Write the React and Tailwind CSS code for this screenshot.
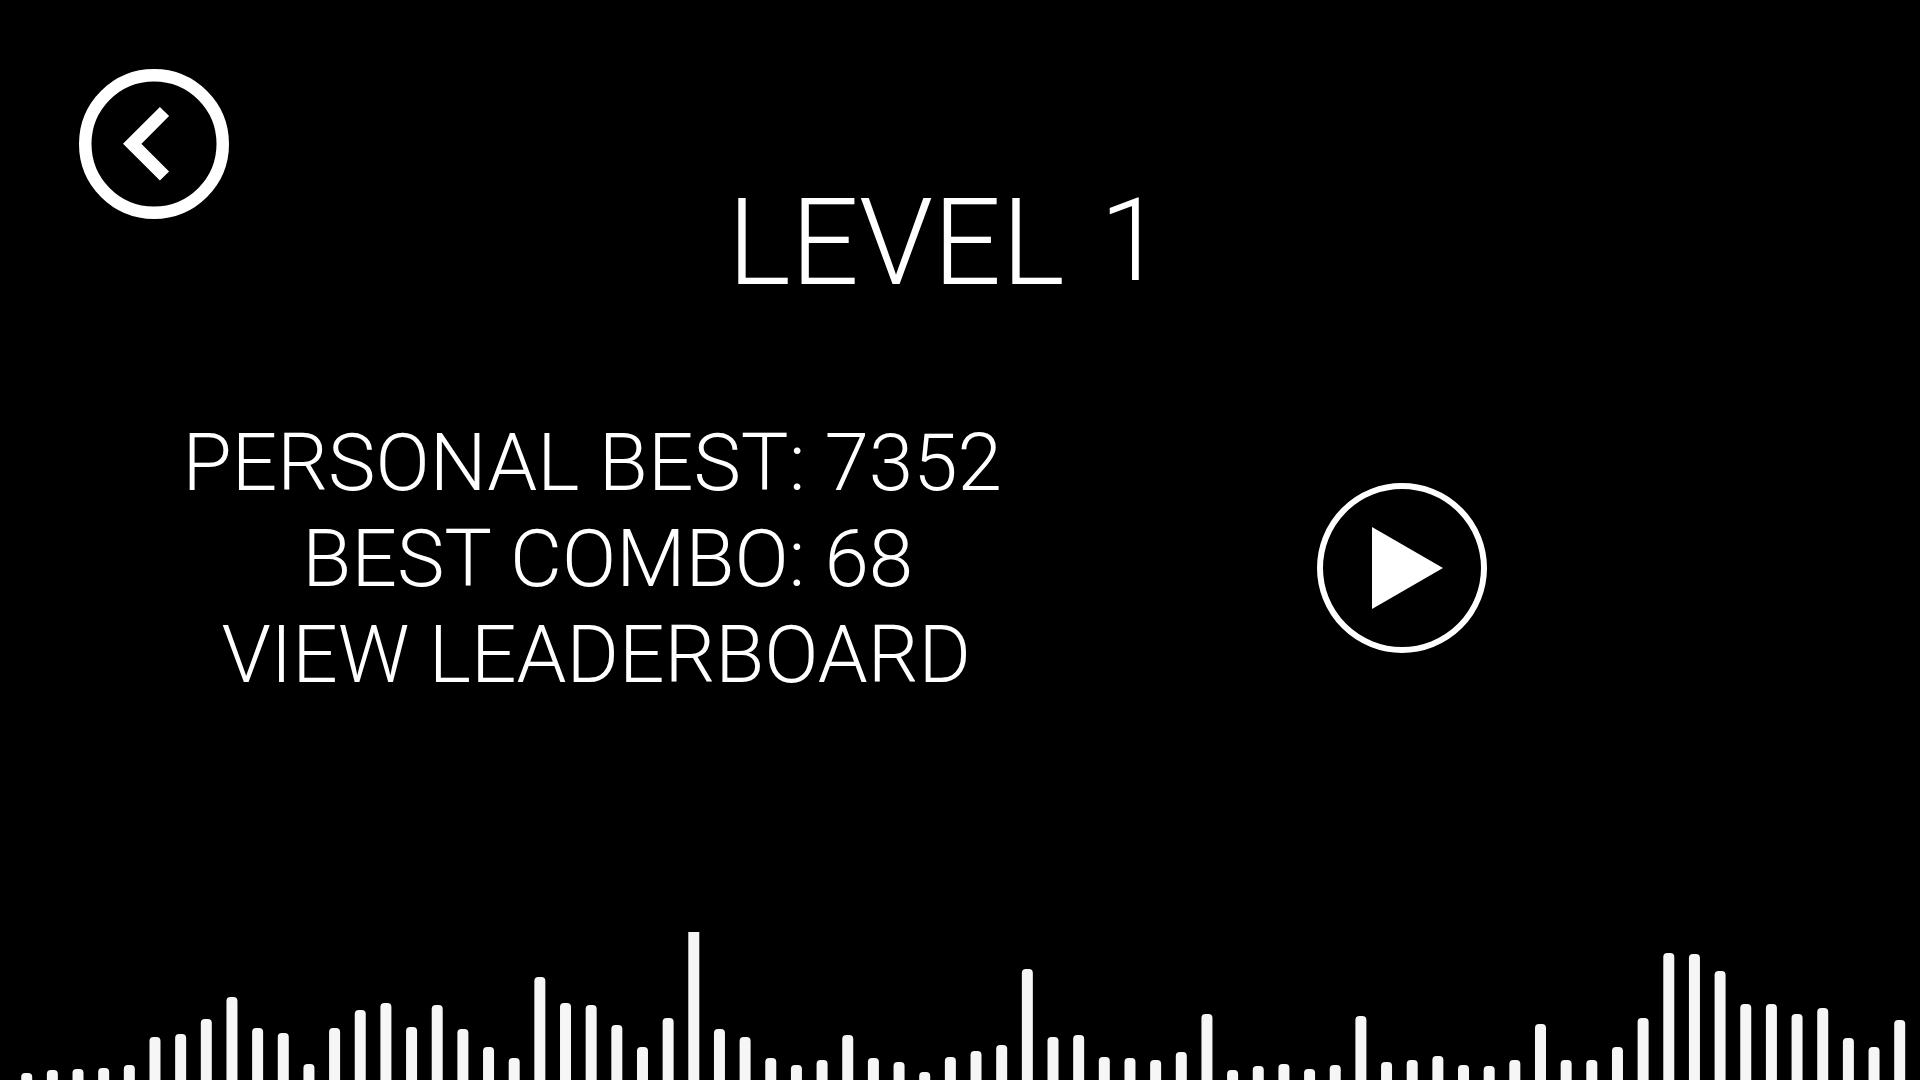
const LEVELS = [
  7, 10, 11, 12, 15, 43, 46, 61, 83, 52, 47, 16, 52, 70, 77, 53, 75, 51, 33, 22,
  103, 77, 75, 55, 33, 62, 148, 51, 43, 22, 15, 20, 45, 22, 18, 8, 23, 29, 35,
  111, 43, 45, 23, 22, 20, 28, 66, 10, 14, 16, 11, 15, 64, 18, 20, 24, 15, 14,
  20, 56, 20, 20, 33, 62, 127, 126, 109, 76, 76, 66, 72, 42, 33, 60,
];

const SPAN = 1873;

function BackIcon() {
  return (
    <svg viewBox="0 0 150 150" className="size-full" fill="none" stroke="white" aria-hidden="true">
      <circle cx="75" cy="75" r="68.75" strokeWidth="12.5" />
      <path d="M85.5 42.5 L53.2 74.8 L85.5 107" strokeWidth="13" />
    </svg>
  );
}

function PlayIcon() {
  return (
    <svg viewBox="0 0 170 170" className="size-full" aria-hidden="true">
      <circle cx="85" cy="85" r="82" fill="none" stroke="white" strokeWidth="6" />
      <path d="M55 44 L126 85 L55 126 Z" fill="white" />
    </svg>
  );
}

function Visualizer() {
  return (
    <svg viewBox="0 0 1920 148" className="block w-full" role="img" aria-label="Audio levels">
      {LEVELS.map((level, i) => {
        const center = 26.7 + (SPAN * i) / (LEVELS.length - 1);
        return (
          <rect
            key={i}
            x={center - 5.5}
            y={148 - level}
            width="11"
            height={level + 10}
            rx={level === 148 ? 0 : 4}
            fill="#f6f6f6"
          />
        );
      })}
    </svg>
  );
}

export default function App() {
  return (
    <main className="flex min-h-screen flex-col bg-black font-['Roboto',sans-serif] font-light text-white">
      <header className="grid grid-cols-[150px_1fr_150px] pt-[69px] pr-[108px] pl-[79px]">
        <button type="button" aria-label="Back" className="size-[150px] cursor-pointer rounded-full">
          <BackIcon />
        </button>
        <h1 className="mt-[114px] flex items-start justify-center gap-[35px] text-[120px] leading-[120px]">
          <span>LEVEL</span>
          <span className="text-[115px] leading-[116px]">1</span>
        </h1>
      </header>

      <section className="mt-28 grid grid-cols-[62%_22%] items-start">
        <div className="grid grid-cols-[auto_auto] justify-center gap-x-[19px] pr-[6px] text-[80px] leading-[96px] whitespace-nowrap">
          <span className="text-right">PERSONAL BEST:</span>
          <span>7352</span>
          <span className="text-right">BEST COMBO:</span>
          <span>68</span>
          <a href="#leaderboard" className="col-span-2 pl-2 text-center">
            VIEW LEADERBOARD
          </a>
        </div>
        <button type="button" aria-label="Play" className="mt-[68px] size-[170px] cursor-pointer justify-self-center rounded-full">
          <PlayIcon />
        </button>
      </section>

      <footer className="mt-auto">
        <Visualizer />
      </footer>
    </main>
  );
}
